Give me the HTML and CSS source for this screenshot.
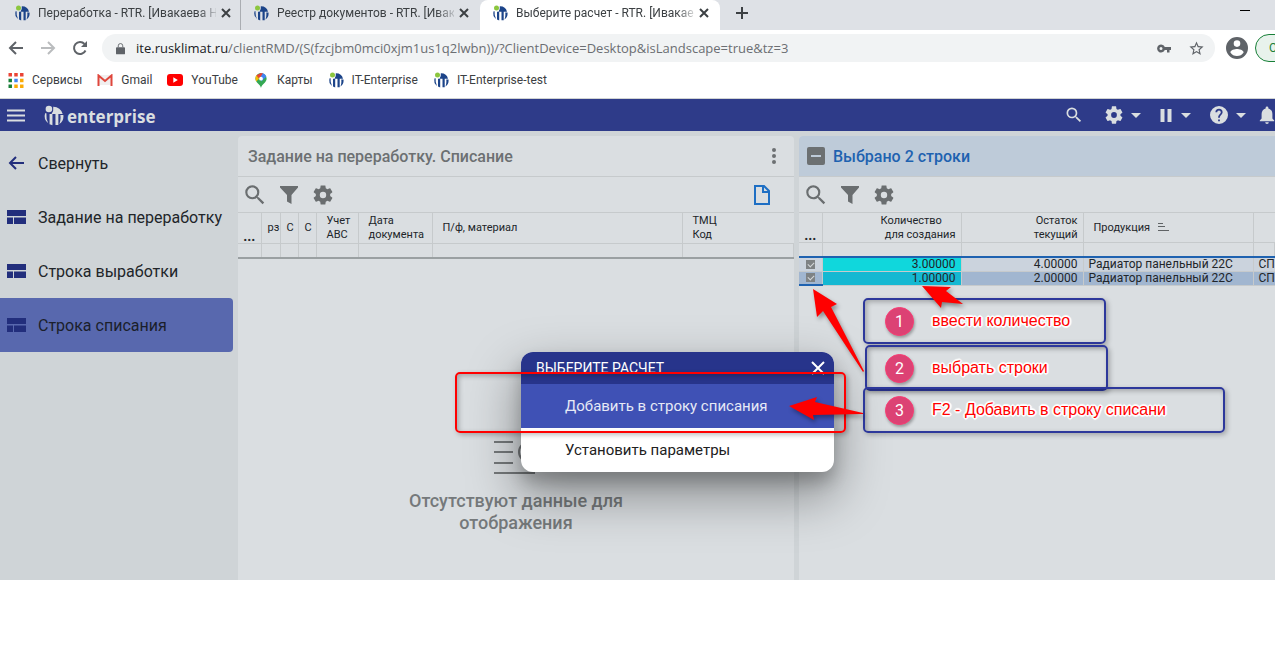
FILE: index.html
```html
<!DOCTYPE html>
<html lang="ru">
<head>
<meta charset="utf-8">
<title>Выберите расчет - RTR</title>
<link rel="stylesheet" href="styles.css">
</head>
<body>
<svg class="defs" aria-hidden="true">
  <symbol id="it" viewBox="0 0 16 16">
    <circle class="dot" cx="4.500" cy="3" r="2.500"/>
    <path d="M7.800 1.300A7.200 7.200 0 0 1 15 6.800H11.700V15.200H9.500V6.800H6.500Q8.300 4.500 7.800 1.300z"/>
    <path d="M2.600 6.200Q2.200 10.500 4 13.900A7.200 7.200 0 0 1 1.600 6.200z"/>
    <path d="M5 6.800H7.200V15.400L5 14.600z"/>
    <path d="M13.200 7.600H15.500A7.200 7.200 0 0 1 12.500 14.500Q13.800 11 13.200 7.600z"/>
  </symbol>
  <symbol id="close" viewBox="0 0 16 16"><path d="M4 4l8 8M12 4l-8 8"/></symbol>
  <symbol id="search" viewBox="0 0 24 24"><path d="M15.500 14h-.79l-.28-.27A6.471 6.471 0 0 0 16 9.500 6.500 6.500 0 1 0 9.500 16c1.610 0 3.090-.59 4.230-1.570l.27.28v.79l5 4.990L20.490 19l-4.990-5zm-6 0C7.010 14 5 11.990 5 9.500S7.010 5 9.500 5 14 7.010 14 9.500 11.990 14 9.500 14z"/></symbol>
  <symbol id="gear" viewBox="2 2 20 20"><path d="M19.140 12.940c.04-.3.060-.61.060-.94 0-.32-.02-.64-.07-.94l2.030-1.580c.18-.14.23-.41.12-.61l-1.920-3.320c-.12-.22-.37-.29-.59-.22l-2.390.96c-.5-.38-1.030-.7-1.620-.94l-.36-2.540c-.04-.24-.24-.41-.48-.41h-3.840c-.24 0-.43.17-.47.41l-.36 2.540c-.59.24-1.130.57-1.620.94l-2.390-.96c-.22-.08-.47 0-.59.22L2.740 8.870c-.12.21-.08.47.12.61l2.030 1.580c-.05.3-.09.63-.09.94s.02.64.070.94l-2.030 1.580c-.18.14-.23.41-.12.61l1.920 3.320c.12.22.37.29.59.22l2.390-.96c.5.38 1.030.7 1.620.94l.36 2.540c.05.24.24.41.48.41h3.840c.24 0 .44-.17.47-.41l.36-2.540c.59-.24 1.130-.56 1.620-.94l2.390.96c.22.080.47 0 .59-.22l1.920-3.320c.12-.22.070-.47-.12-.61l-2.010-1.580zM12 15.200a3.200 3.200 0 1 1 0-6.400 3.200 3.200 0 0 1 0 6.400z"/></symbol>
  <symbol id="funnel" viewBox="0 0 18 18"><path d="M0 0h18v1.500L11.500 9v9L7 15.500V9L0 1.500z"/></symbol>
  <symbol id="board" viewBox="0 0 19 14"><path d="M0 0h19v6H0zM0 7.500h6V14H0zM7 7.500h12V14H7z"/></symbol>
</svg>

<header class="browser">
  <nav class="tabs" aria-label="Вкладки">
    <a class="tab" href="#"><svg class="logo"><use href="#it"/></svg><span class="tab-title">Переработка - RTR. [Ивакаева Н</span><svg class="x"><use href="#close"/></svg></a>
    <a class="tab" href="#"><svg class="logo"><use href="#it"/></svg><span class="tab-title">Реестр документов - RTR. [Ивак</span><svg class="x"><use href="#close"/></svg></a>
    <a class="tab active" href="#"><svg class="logo"><use href="#it"/></svg><span class="tab-title">Выберите расчет - RTR. [Ивакае</span><svg class="x"><use href="#close"/></svg></a>
    <button class="newtab" aria-label="Новая вкладка"><svg viewBox="0 0 14 14"><path d="M7 1v12M1 7h12"/></svg></button>
    <button class="minimize" aria-label="Свернуть окно"></button>
  </nav>
  <div class="toolbar">
    <button class="nav" aria-label="Назад"><svg viewBox="0 0 16 16"><path d="M15 8H2M8 2L2 8l6 6"/></svg></button>
    <button class="nav off" aria-label="Вперед"><svg viewBox="0 0 16 16"><path d="M1 8h13M8 2l6 6-6 6"/></svg></button>
    <button class="nav" aria-label="Обновить"><svg viewBox="0 0 16 16"><path d="M13.500 10.500A6 6 0 1 1 12.500 4"/><path class="solid" d="M15 1v6H9z"/></svg></button>
    <div class="address">
      <svg class="lock" viewBox="0 0 10 13"><path d="M1 5h8q1 0 1 1v6q0 1-1 1H1q-1 0-1-1V6q0-1 1-1z"/><path class="hoop" d="M2.500 5V3.500a2.500 2.500 0 0 1 5 0V5"/></svg>
      <span class="url"><b>ite.rusklimat.ru</b>/clientRMD/(S(fzcjbm0mci0xjm1us1q2lwbn))/?ClientDevice=Desktop&amp;isLandscape=true&amp;tz=3</span>
      <svg class="key" viewBox="0 0 14 9"><path d="M7.800 3A4 4 0 1 0 7.800 6H10v2.500h2.500V6H14V3zM4 6a1.500 1.500 0 1 1 0-3 1.500 1.500 0 0 1 0 3z"/></svg>
      <svg class="star" viewBox="0 0 24 24"><path d="M22 9.240l-7.190-.62L12 2 9.190 8.630 2 9.240l5.460 4.730L5.820 21 12 17.270 18.180 21l-1.630-7.030L22 9.240zM12 15.400l-3.760 2.270 1-4.280-3.320-2.880 4.380-.38L12 6.100l1.710 4.040 4.380.38-3.320 2.880 1 4.280L12 15.400z"/></svg>
    </div>
    <svg class="avatar" viewBox="2 2 20 20"><path d="M12 2a10 10 0 1 0 0 20 10 10 0 0 0 0-20zm0 3a3 3 0 1 1 0 6 3 3 0 0 1 0-6zm0 14.200a7.200 7.200 0 0 1-6-3.220c.03-1.990 4-3.080 6-3.080s5.970 1.090 6 3.080a7.200 7.200 0 0 1-6 3.220z"/></svg>
    <button class="update">Обновить</button>
  </div>
  <nav class="bookmarks" aria-label="Закладки">
    <a href="#"><svg class="bm apps" viewBox="0 0 13 13"><path fill="#ea4335" d="M0 0h3v3H0zM5 0h3v3H5zM10 0h3v3h-3z"/><path fill="#188038" d="M0 5h3v3H0zM0 10h3v3H0z"/><path fill="#4285f4" d="M5 5h3v3H5z"/><path fill="#fbab05" d="M10 5h3v3h-3zM5 10h3v3H5zM10 10h3v3h-3z"/></svg>Сервисы</a>
    <a href="#"><svg class="bm" viewBox="0 0 16 12"><path fill="#f1efef" d="M1 1h14v10H1z"/><path fill="none" stroke="#df473c" stroke-width="2" d="M1.500 12V1.500L8 7l6.500-5.500V12"/></svg>Gmail</a>
    <a href="#"><svg class="bm" viewBox="0 0 16 12"><rect width="16" height="12" rx="3" fill="#f00"/><path fill="#fff" d="M6.300 3.300v5.400L10.800 6z"/></svg>YouTube</a>
    <a href="#"><svg class="bm pin" viewBox="0 0 12 16"><path fill="#34a853" d="M6 16C5.500 12 0 10 0 6a6 6 0 0 1 12 0c0 4-5.500 6-6 10z"/><path fill="#4285f4" d="M6 0a6 6 0 0 1 5.600 4L6 9z"/><path fill="#ea4335" d="M6 0L1 2.500 4 6l4-5.500z"/><path fill="#fbbc04" d="M.8 9C-.2 7 0 4 1 2.500L4 6z"/><circle cx="6" cy="6" r="2" fill="#fff"/></svg>Карты</a>
    <a href="#"><svg class="logo"><use href="#it"/></svg>IT-Enterprise</a>
    <a href="#"><svg class="logo"><use href="#it"/></svg>IT-Enterprise-test</a>
  </nav>
</header>

<div class="app">
  <header class="appbar">
    <button class="menu" aria-label="Меню"><svg viewBox="0 0 18 13"><path d="M0 1.500h18M0 6.500h18M0 11.500h18"/></svg></button>
    <a class="brand" href="#"><svg class="brand-mark"><use href="#it"/></svg><span>enterprise</span></a>
    <div class="actions">
      <button class="act find" aria-label="Поиск"><svg><use href="#search"/></svg></button>
      <button class="act" aria-label="Настройки"><svg><use href="#gear"/></svg><i class="caret"></i></button>
      <button class="act" aria-label="Пауза"><svg class="pause" viewBox="0 0 12 13"><path d="M0 0h4v13H0zM7 0h4v13H7z"/></svg><i class="caret"></i></button>
      <button class="act" aria-label="Справка"><svg viewBox="2 2 20 20"><path d="M12 2a10 10 0 1 0 0 20 10 10 0 0 0 0-20zm1 17h-2v-2h2zm2.070-7.750l-.9.920C13.450 12.900 13 13.500 13 15h-2v-.5c0-1.100.45-2.100 1.170-2.830l1.240-1.260c.37-.36.590-.86.590-1.410a2 2 0 0 0-4 0H8a4 4 0 1 1 8 0c0 .88-.36 1.680-.93 2.250z"/></svg><i class="caret"></i></button>
      <button class="act bell" aria-label="Уведомления"><svg viewBox="4 2 16 20"><path d="M12 22a2 2 0 0 0 2-2h-4a2 2 0 0 0 2 2zm6-6v-5c0-3.070-1.640-5.640-4.500-6.320V4a1.500 1.500 0 0 0-3 0v.68C7.630 5.360 6 7.920 6 11v5l-2 2v1h16v-1z"/></svg></button>
    </div>
  </header>
  <div class="workspace">
    <nav class="side">
      <a href="#"><svg class="side-icon" viewBox="0 0 19 16"><path class="line" d="M17 8H3M9 2L3 8l6 6"/></svg>Свернуть</a>
      <a href="#"><svg class="side-icon"><use href="#board"/></svg>Задание на переработку</a>
      <a href="#"><svg class="side-icon"><use href="#board"/></svg>Строка выработки</a>
      <a class="current" href="#"><svg class="side-icon"><use href="#board"/></svg>Строка списания</a>
    </nav>

    <section class="panel source">
      <div class="panel-head"><h2>Задание на переработку. Списание</h2><button class="more" aria-label="Еще"><svg viewBox="0 0 4 16"><circle cx="2" cy="2" r="2"/><circle cx="2" cy="8" r="2"/><circle cx="2" cy="14" r="2"/></svg></button></div>
      <div class="tools">
        <button aria-label="Поиск"><svg class="i-search"><use href="#search"/></svg></button>
        <button aria-label="Фильтр"><svg class="i-funnel"><use href="#funnel"/></svg></button>
        <button aria-label="Настройки"><svg><use href="#gear"/></svg></button>
        <button class="new-doc" aria-label="Создать"><svg viewBox="0 0 16 20"><path d="M1 1h9l5 5v13H1zM9 1v6h6"/></svg></button>
      </div>
      <table class="grid">
        <colgroup><col class="w23"><col class="w19"><col class="w18"><col class="w18"><col class="w42"><col class="w74"><col class="w250"><col></colgroup>
        <thead>
          <tr><th class="dots">...</th><th class="tight">рз</th><th class="tight">С</th><th class="tight">С</th><th>Учет<br>АВС</th><th>Дата<br>документа</th><th>П/ф, материал</th><th>ТМЦ<br>Код</th></tr>
          <tr class="filters"><td></td><td></td><td></td><td></td><td></td><td></td><td></td><td></td></tr>
        </thead>
      </table>
      <div class="empty">
        <svg viewBox="0 0 50 34"><path d="M3 2h19M3 12h19M3 23h19M3 33h41"/><circle cx="38" cy="12" r="10"/></svg>
        <p>Отсутствуют данные для<br>отображения</p>
      </div>
    </section>

    <section class="panel target">
      <div class="panel-head selected"><button class="minus" aria-label="Снять выделение"></button><h2>Выбрано 2 строки</h2></div>
      <div class="tools">
        <button aria-label="Поиск"><svg class="i-search"><use href="#search"/></svg></button>
        <button aria-label="Фильтр"><svg class="i-funnel"><use href="#funnel"/></svg></button>
        <button aria-label="Настройки"><svg><use href="#gear"/></svg></button>
      </div>
      <table class="grid rows">
        <colgroup><col class="w23"><col class="w139"><col class="w122"><col class="w170"><col></colgroup>
        <thead>
          <tr><th class="dots">...</th><th class="num amount">Количество&nbsp;&nbsp;&nbsp;&nbsp;&nbsp;<br>для создания</th><th class="num rest">Остаток<br>текущий</th><th>Продукция <svg class="sort" viewBox="0 0 12 8"><path d="M1 .5h5M1 3.500h7M1 7.500h11"/></svg></th><th></th></tr>
          <tr class="filters"><td></td><td></td><td></td><td></td><td></td></tr>
        </thead>
        <tbody>
          <tr><td class="check"><input type="checkbox" checked aria-label="Строка 1"></td><td class="num cyan">3.00000</td><td class="num">4.00000</td><td>Радиатор панельный 22С</td><td>СП</td></tr>
          <tr class="on"><td class="check"><input type="checkbox" checked aria-label="Строка 2"></td><td class="num cyan">1.00000</td><td class="num">2.00000</td><td>Радиатор панельный 22С</td><td>СП</td></tr>
        </tbody>
      </table>
    </section>
  </div>
</div>

<div class="dialog" role="dialog" aria-labelledby="dlg">
  <div class="dialog-head"><h3 id="dlg">ВЫБЕРИТЕ РАСЧЕТ</h3><button aria-label="Закрыть"><svg viewBox="0 0 14 14"><path d="M1 1l12 12M13 1L1 13"/></svg></button></div>
  <button class="choice picked">Добавить в строку списания</button>
  <button class="choice">Установить параметры</button>
</div>

<div class="notes">
  <div class="frame target-frame"></div>
  <div class="frame note n1"><span class="badge">1</span><span>ввести количество</span></div>
  <div class="frame note n2"><span class="badge">2</span><span>выбрать строки</span></div>
  <div class="frame note n3"><span class="badge">3</span><span>F2 - Добавить в строку списани</span></div>
  <svg class="arrows" viewBox="0 0 1275 663">
    <path d="M922 286l29 1-5 4 17 13-21-2-1 6z"/>
    <path d="M813 289l24 15-6 3 33 64-1 1-40-61-6 6z"/>
    <path d="M789 406l28-9-2 5 48 11v1l-50 1 1 5z"/>
  </svg>
</div>
</body>
</html>
```
FILE: styles.css
```css
* { box-sizing: border-box; }
body { margin: 0; background: #fff; font-family: Roboto, "Liberation Sans", sans-serif; position: relative; overflow: hidden; min-height: 100vh; }
a { color: inherit; text-decoration: none; }
button { border: 0; padding: 0; background: none; font: inherit; color: inherit; display: flex; align-items: center; flex: none; }
h2, h3, p { margin: 0; font-weight: 400; }
svg { display: block; flex: none; fill: currentColor; }
.defs { position: absolute; width: 0; height: 0; }

/* browser chrome */
.browser { border-bottom: 1px solid #d0d3d3; }
.logo { width: 16px; height: 16px; fill: #1c4489; --dot: #8cc63f; }
.dot { fill: var(--dot); }
.tabs { display: flex; height: 30px; background: #dee1e6; color: #3c4043; font-size: 12px; }
.tab { display: flex; align-items: center; width: 240px; padding: 0 6px 4px 14px; }
.tab-title { flex: 1; margin-left: 8px; overflow: hidden; white-space: nowrap; mask-image: linear-gradient(90deg, #000 90%, rgba(0,0,0,.2)); }
.tab.active { background: #fff; border-radius: 8px 8px 0 0; }
.tab + .tab { padding-left: 12px; padding-right: 8px; }
.tab + .tab:not(.active) { border-left: 1px solid #aaadb2; }
.x { width: 16px; height: 16px; margin-left: 2px; fill: none; stroke: #3c4043; stroke-width: 2; }
.newtab { width: 44px; justify-content: center; padding-bottom: 4px; }
.newtab svg { width: 14px; stroke: #3c4043; stroke-width: 2; }
.minimize { margin: 10px 25px 0 auto; width: 10px; height: 1px; background: #000; }
.toolbar { display: flex; align-items: center; height: 36px; padding-left: 8px; overflow: hidden; color: #5f6368; }
.nav { width: 32px; height: 28px; }
.nav svg { width: 16px; height: 16px; fill: none; stroke: #5f6368; stroke-width: 2; }
.nav.off svg { stroke: #babcbe; }
.nav .solid { fill: #5f6368; stroke: none; }
.address { display: flex; align-items: center; flex: 1; height: 28px; margin-right: 11px; margin-left: -2px; padding: 0 10px 0 14px; border-radius: 14px; background: #f1f3f4; font: 13px/18px "Open Sans", "Noto Sans", sans-serif; }
.lock { width: 9px; height: 13px; }
.hoop { fill: none; stroke: #5f6368; stroke-width: 1; }
.url { flex: 1; margin-left: 11px; white-space: nowrap; overflow: hidden; color: #6b6e72; }
.url b { font-weight: 400; color: #202124; }
.key { width: 14px; height: 9px; margin-right: 17px; }
.star { width: 17px; height: 17px; }
.avatar { width: 22px; height: 22px; margin-right: 7px; }
.update { height: 28px; width: 100px; margin-right: -80px; padding-left: 13px; border: 1px solid #188038; border-radius: 14px; background: #e8f2ec; color: #188038; font-size: 12px; }
.bookmarks { display: flex; gap: 15px; height: 32px; padding: 0 0 4px 8px; align-items: center; color: #3c4043; font-size: 12px; }
.bookmarks a { display: flex; align-items: center; gap: 8px; }
.bm { width: 16px; height: 12px; }
.bm.apps, .bm.pin { width: 16px; height: 15px; }

/* application */
.app { background: #cfd4d7; color: #212529; }
.appbar { display: flex; align-items: center; height: 32px; padding-left: 7px; background: #2e3b89; color: #dadee0; overflow: hidden; }
.menu svg { width: 18px; height: 13px; stroke: currentColor; stroke-width: 2; }
.brand { display: flex; align-items: center; gap: 3px; margin-left: 18px; font: 700 17px/22px "Open Sans", "Noto Sans", sans-serif; }
.brand span { padding-top: 3px; }
.brand-mark { --dot: #dadee0; width: 21px; height: 21px; }
.actions { display: flex; align-items: center; margin-left: auto; margin-right: 0; gap: 19px; }
.act { gap: 8px; }
.act svg { width: 18px; height: 18px; }
.act svg.pause { width: 13px; height: 13px; }
.act.find { margin-right: 2px; }
.act.find svg { width: 20px; height: 20px; }
.caret { border: 5px solid transparent; border-top-color: currentColor; border-bottom: 0; }
.act.bell { margin-left: -6px; }
.act.bell svg { width: 16px; }
.workspace { display: flex; gap: 5px; height: 449px; padding-top: 5px; overflow: hidden; }
.side { width: 233px; flex: none; font-size: 16px; white-space: nowrap; }
.side a { display: flex; align-items: center; gap: 12px; height: 54px; padding-left: 7px; }
.side a.current { background: #5868ae; border-radius: 0 4px 4px 0; color: #1b1f2b; }
.side-icon { width: 19px; height: 16px; fill: #222e7c; }
.side-icon .line { fill: none; stroke: #222e7c; stroke-width: 2; }
.panel { background: #dadee1; border-radius: 4px 4px 0 0; overflow: hidden; min-width: 0; }
.source { flex: 556; }
.target { flex: 476; border-top-right-radius: 0; }
.panel-head { display: flex; align-items: center; height: 41px; padding: 0 18px 0 10px; border-bottom: 1px solid #c6cacc; color: #6c7072; }
.panel-head h2 { font-size: 16px; font-weight: 500; }
.more { margin-left: auto; }
.more svg { width: 4px; height: 16px; }
.panel-head.selected { background: #becbd9; color: #1e62b0; padding-left: 8px; gap: 8px; }
.minus { width: 18px; height: 18px; border-radius: 2px; background: #6c7072; justify-content: center; }
.minus::after { content: ""; width: 10px; height: 2px; background: #becbd9; }
.tools { display: flex; align-items: center; gap: 15px; height: 35px; padding: 0 24px 0 4px; color: #6a6e70; }
.tools svg { width: 20px; height: 20px; }
.tools svg.i-search { width: 26px; height: 26px; }
.tools svg.i-funnel { width: 18px; height: 18px; }
.tools button:first-child { margin-right: -3px; }
.new-doc { margin-left: auto; color: #1e6fc4; }
.tools .new-doc svg { width: 16px; fill: none; stroke: currentColor; stroke-width: 2; }
.grid { width: 100%; table-layout: fixed; border-collapse: collapse; font-size: 11px; line-height: 14px; border-bottom: 2px solid #9aa0a2; }
.grid th { height: 31px; padding: 0 0 0 10px; border: 1px solid #c6cacc; border-left: 0; font-weight: 400; text-align: left; white-space: nowrap; overflow: hidden; }
.grid th:last-child, .grid td:last-child { border-right: 0; }
.grid .filters td { height: 14px; padding: 0; border-right: 1px solid #c6cacc; }
.grid th.tight { padding-left: 6px; }
.grid th.dots { padding: 0; text-align: center; vertical-align: bottom; font-size: 14px; font-weight: 700; }
.w23 { width: 23px; } .w19 { width: 19px; } .w18 { width: 18px; } .w42 { width: 42px; } .w74 { width: 74px; } .w250 { width: 250px; }
.w139 { width: 139px; } .w122 { width: 122px; } .w170 { width: 170px; }
.grid .num { text-align: right; padding-left: 0; padding-right: 5px; }
.rows { border-bottom: 0; }
.rows th { height: 30px; }
.rows thead { border-bottom: 2px solid #1e62b0; }
.sort { display: inline-block; width: 12px; height: 8px; margin-left: 4px; stroke: #5f6365; }
.rows tbody td { height: 14px; padding: 0 5px; line-height: 13px; font-size: 12px; border-right: 1px solid #c6cacc; border-bottom: 1px solid #c6cacc; background: #cbd3dd; white-space: nowrap; overflow: hidden; }
.rows tbody td.cyan { background: #10d7dc; }
.rows tbody .on td { background: #a1b6d0; }
.rows tbody .on td.cyan { background: #14b8d2; }
.rows tbody td.check { padding: 0 0 0 7px; }
.rows tbody .on td.check { border-bottom: 2px solid #1e62b0; }
.check input { appearance: none; display: block; width: 9px; height: 9px; margin: 0; background: #7e8284; position: relative; }
.check input::after { content: ""; position: absolute; left: 2px; top: 2px; width: 5px; height: 3px; border: solid #d4d8da; border-width: 0 0 1px 1px; transform: rotate(-45deg); }
.empty { display: flex; flex-direction: column; align-items: center; padding-top: 181px; color: #75797b; }
.empty svg { width: 50px; height: 34px; fill: none; stroke: currentColor; stroke-width: 2; }
.empty p { margin-top: 16px; font-size: 18px; line-height: 22px; font-weight: 500; text-align: center; }

/* dialog */
.dialog { position: absolute; left: 521px; top: 352px; width: 313px; border-radius: 12px; overflow: hidden; background: #fff; box-shadow: 0 10px 16px rgba(0,0,0,.2), 0 22px 50px 4px rgba(0,0,0,.35); }
.dialog-head { display: flex; align-items: center; justify-content: space-between; height: 32px; padding: 0 9px 0 15px; background: #27348b; color: #fff; }
.dialog-head h3 { font-size: 14px; }
.dialog-head svg { width: 14px; height: 14px; stroke: currentColor; stroke-width: 2; }
.choice { width: 100%; height: 44px; padding-left: 44px; font-size: 15px; color: #212121; }
.choice.picked { background: #3f51b5; color: #e6e9f6; }

/* callouts over the screen */
.notes { position: absolute; inset: 0; pointer-events: none; overflow: hidden; }
.frame { position: absolute; border: 2px solid #2d389b; border-radius: 5px; box-shadow: 2px 2px 5px rgba(0,0,0,.25), inset 2px 2px 5px rgba(0,0,0,.25); }
.target-frame { left: 455px; top: 372px; width: 391px; height: 61px; border-color: #f00; }
.note { display: flex; align-items: center; gap: 18px; height: 46px; padding-left: 20px; font: 16px/20px "Liberation Sans", Arial, sans-serif; color: #f00; text-shadow: 1px 1px #fff, -1px -1px #fff, 1px -1px #fff, -1px 1px #fff, 0 2px 1px #fff, 0 -2px 1px #fff, 2px 0 1px #fff, -2px 0 1px #fff; }
.n1 { left: 863px; top: 298px; width: 243px; }
.n2 { left: 865px; top: 345px; width: 243px; padding-left: 18px; }
.n3 { left: 863px; top: 387px; width: 362px; }
.badge { width: 29px; height: 29px; border-radius: 50%; border: 1px solid #fa3a72; background: #dc4274; color: #fff; font: 16px/27px Roboto, sans-serif; text-align: center; text-shadow: none; box-shadow: 1px 2px 3px rgba(0,0,0,.3); }
.arrows { position: absolute; left: 0; top: 0; width: 1275px; height: 663px; fill: #f00; filter: drop-shadow(2px 3px 2px rgba(0,0,0,.35)); }
```
